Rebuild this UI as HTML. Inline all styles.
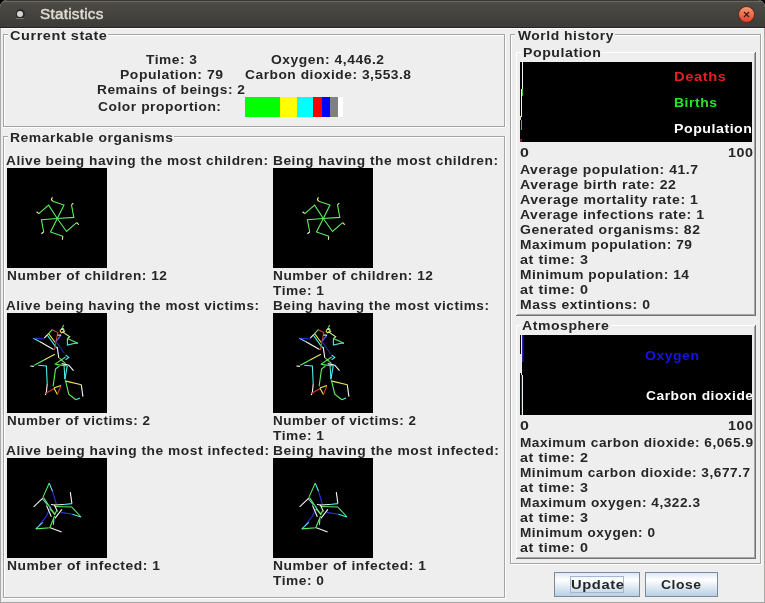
<!DOCTYPE html>
<html><head><meta charset="utf-8"><title>Statistics</title>
<style>
html,body{margin:0;padding:0;}
body{width:765px;height:603px;position:relative;overflow:hidden;background:#000;font-family:"Liberation Sans",sans-serif;}
#win{position:absolute;left:0;top:0;width:765px;height:603px;background:#eeeeee;border-radius:7px 7px 0 0;overflow:hidden;}
.a{position:absolute;}
.t{position:absolute;white-space:pre;font-weight:bold;font-size:13px;line-height:15px;transform-origin:0 0;will-change:transform;letter-spacing:0.5px;}
.g{position:absolute;background:#a4a4a4;}
.w{position:absolute;background:#ffffff;}
.blk{position:absolute;background:#000;}
</style></head><body>
<div id="win">
<!-- title bar -->
<div class="a" style="left:0;top:0;width:765px;height:28px;background:linear-gradient(#3a3935 0px,#3a3935 1px,#69675f 1px,#69675f 2px,#524f4a 2px,#4b4944 4px,#3d3c38 26px,#3d3c38 27px,#252422 27px);"></div>
<div class="a" style="left:40px;top:5px;font-size:14px;font-weight:normal;line-height:18px;color:#dfdbd2;white-space:pre;transform-origin:0 0;transform:scaleX(1.095);will-change:transform;-webkit-text-stroke:0.45px #dfdbd2;letter-spacing:0.2px">Statistics</div>
<div class="a" style="left:15.5px;top:9px;width:9px;height:9.5px;border-radius:50%;background:#2c2b28;"></div><div class="a" style="left:17px;top:10.8px;width:6.2px;height:6.2px;border-radius:50%;background:#d6d5d0;"></div><div class="a" style="left:16px;top:18px;width:8px;height:1px;background:#75736c;border-radius:1px;"></div>
<div class="a" style="left:738px;top:6px;width:17px;height:17px;border-radius:50%;background:#5e2a1c;"></div>
<div class="a" style="left:739px;top:7px;width:15px;height:15px;border-radius:50%;background:linear-gradient(#f49a78,#ec6a48 55%,#e4402e);"></div>
<svg class="a" style="left:738px;top:6px;" width="17" height="17"><path d="M6 6L11 11M11 6L6 11" stroke="#40180c" stroke-width="1.2"/></svg>
<!-- window borders -->
<div class="a" style="left:0;top:28px;width:765px;height:1px;background:#fbfbfb;"></div>
<div class="a" style="left:0;top:28px;width:1px;height:575px;background:#a9a9ab;"></div>
<div class="a" style="left:764px;top:28px;width:1px;height:575px;background:#a8a8a6;"></div>
<div class="g" style="left:0;top:602px;width:765px;height:1px;"></div>

<!-- Current state etched border: x3..505, y34..127 -->
<div class="g" style="left:3px;top:34px;width:5px;height:1px;"></div>
<div class="w" style="left:4px;top:35px;width:4px;height:1px;"></div>
<div class="g" style="left:108px;top:34px;width:396px;height:1px;"></div>
<div class="w" style="left:108px;top:35px;width:396px;height:1px;"></div>
<div class="g" style="left:3px;top:34px;width:1px;height:92px;"></div>
<div class="w" style="left:4px;top:35px;width:1px;height:91px;"></div>
<div class="g" style="left:504px;top:34px;width:1px;height:93px;"></div>
<div class="w" style="left:505px;top:34px;width:1px;height:94px;"></div>
<div class="g" style="left:3px;top:126px;width:502px;height:1px;"></div>
<div class="w" style="left:3px;top:127px;width:503px;height:1px;"></div>

<!-- color bar -->
<div class="a" style="left:245px;top:97px;height:20px;width:35px;background:#00ff00;"></div>
<div class="a" style="left:280px;top:97px;height:20px;width:17px;background:#ffff00;"></div>
<div class="a" style="left:297px;top:97px;height:20px;width:16px;background:#00ffff;"></div>
<div class="a" style="left:313px;top:97px;height:20px;width:9px;background:#ff0000;"></div>
<div class="a" style="left:322px;top:97px;height:20px;width:8px;background:#0000ff;"></div>
<div class="a" style="left:330px;top:97px;height:20px;width:8px;background:#808080;"></div>
<div class="a" style="left:338px;top:97px;height:20px;width:5px;background:#ffffff;"></div>

<!-- Remarkable organisms etched border: x3..505, y136..598 -->
<div class="g" style="left:3px;top:136px;width:5px;height:1px;"></div>
<div class="w" style="left:4px;top:137px;width:4px;height:1px;"></div>
<div class="g" style="left:174px;top:136px;width:330px;height:1px;"></div>
<div class="w" style="left:174px;top:137px;width:330px;height:1px;"></div>
<div class="g" style="left:3px;top:136px;width:1px;height:461px;"></div>
<div class="w" style="left:4px;top:137px;width:1px;height:460px;"></div>
<div class="g" style="left:504px;top:136px;width:1px;height:462px;"></div>
<div class="w" style="left:505px;top:136px;width:1px;height:463px;"></div>
<div class="g" style="left:3px;top:597px;width:502px;height:1px;"></div>
<div class="w" style="left:3px;top:598px;width:503px;height:1px;"></div>

<!-- organism boxes -->
<div class="blk" style="left:7px;top:168px;width:100px;height:100px;"></div>
<div class="blk" style="left:273px;top:168px;width:100px;height:100px;"></div>
<div class="blk" style="left:7px;top:313px;width:100px;height:100px;"></div>
<div class="blk" style="left:273px;top:313px;width:100px;height:100px;"></div>
<div class="blk" style="left:7px;top:458px;width:100px;height:100px;"></div>
<div class="blk" style="left:273px;top:458px;width:100px;height:100px;"></div>
<svg class="a" style="left:7px;top:168px;" width="100" height="100" fill="none" stroke-width="1.1"><polyline points="50.3,50.5 57.0,37.0 45.6,33.2" stroke="#60ee60" />
<polyline points="45.6,33.2 44.4,31.6 45.4,29.3" stroke="#fafaa0" />
<polyline points="50.3,50.5 41.6,37.1 31.8,45.6" stroke="#60ee60" />
<polyline points="31.8,45.6 29.6,43.8" stroke="#fafaa0" />
<polyline points="50.3,50.5 34.4,51.7 36.7,64.0" stroke="#60ee60" />
<polyline points="36.7,64.0 34.4,65.8" stroke="#fafaa0" />
<polyline points="50.3,50.5 43.5,64.0 55.8,68.3" stroke="#60ee60" />
<polyline points="55.8,68.3 55.4,71.7" stroke="#fafaa0" />
<polyline points="50.3,50.5 59.5,63.5 69.6,54.6" stroke="#60ee60" />
<polyline points="69.6,54.6 71.8,56.7" stroke="#fafaa0" />
<polyline points="50.3,50.5 66.8,49.4 64.5,36.8" stroke="#60ee60" />
<polyline points="64.5,36.8 66.3,35.2" stroke="#fafaa0" /></svg>
<svg class="a" style="left:273px;top:168px;" width="100" height="100" fill="none" stroke-width="1.1"><polyline points="50.3,50.5 57.0,37.0 45.6,33.2" stroke="#60ee60" />
<polyline points="45.6,33.2 44.4,31.6 45.4,29.3" stroke="#fafaa0" />
<polyline points="50.3,50.5 41.6,37.1 31.8,45.6" stroke="#60ee60" />
<polyline points="31.8,45.6 29.6,43.8" stroke="#fafaa0" />
<polyline points="50.3,50.5 34.4,51.7 36.7,64.0" stroke="#60ee60" />
<polyline points="36.7,64.0 34.4,65.8" stroke="#fafaa0" />
<polyline points="50.3,50.5 43.5,64.0 55.8,68.3" stroke="#60ee60" />
<polyline points="55.8,68.3 55.4,71.7" stroke="#fafaa0" />
<polyline points="50.3,50.5 59.5,63.5 69.6,54.6" stroke="#60ee60" />
<polyline points="69.6,54.6 71.8,56.7" stroke="#fafaa0" />
<polyline points="50.3,50.5 66.8,49.4 64.5,36.8" stroke="#60ee60" />
<polyline points="64.5,36.8 66.3,35.2" stroke="#fafaa0" /></svg>
<svg class="a" style="left:7px;top:313px;" width="100" height="100" fill="none" stroke-width="1.1"><polyline points="26.3,25.2 33.0,28.8" stroke="#50eeee" />
<polyline points="33.0,28.8 46.5,36.5" stroke="#f8f8f8" />
<polyline points="27.5,25.4 36.9,26.0" stroke="#3030e0" />
<polyline points="37.2,25.2 40.9,21.3" stroke="#f8f8f8" />
<polyline points="40.9,21.3 45.5,16.3" stroke="#60ee60" />
<polyline points="41.6,20.6 48.2,29.5" stroke="#f0ea50" />
<polyline points="40.2,22.0 48.0,32.8 50.2,35.0" stroke="#50eeee" />
<polyline points="45.5,17.0 50.8,19.6 47.5,36.9" stroke="#e03828" />
<polyline points="54.0,22.1 49.4,27.9" stroke="#5070ff" />
<polyline points="49.4,29.0 57.5,40.7" stroke="#2828b8" />
<polyline points="50.2,34.2 51.8,44.8" stroke="#f8f8f8" />
<polyline points="55.2,14.5 56.9,12.2" stroke="#60ee60" />
<polyline points="52.9,18.0 55.2,15.1 57.5,18.6 54.6,19.8 52.9,18.0" stroke="#f0ea50" />
<polyline points="55.8,15.1 57.2,17.0" stroke="#50eeee" />
<polyline points="55.2,18.6 62.7,23.8 60.4,25.6" stroke="#d0f0b0" />
<polyline points="60.4,25.6 70.9,30.2" stroke="#60ee60" />
<polyline points="60.4,25.6 60.4,32.0 68.0,30.2 70.9,30.2" stroke="#50eeee" />
<polyline points="50.5,22.1 54.0,22.1" stroke="#f8f8f8" />
<polyline points="27.3,52.2 37.0,47.0" stroke="#60ee60" />
<polyline points="37.0,47.0 47.9,41.2" stroke="#f0ea50" />
<polyline points="23.4,53.0 26.9,53.4" stroke="#f8f8f8" />
<polyline points="31.2,52.2 39.4,53.0 40.2,71.0" stroke="#50eeee" />
<polyline points="40.2,71.0 39.4,78.9 38.3,82.0" stroke="#f8f8f8" />
<polyline points="38.3,80.4 46.9,75.7" stroke="#e03828" />
<polyline points="46.9,75.0 50.4,81.6" stroke="#f0ea50" />
<polyline points="50.4,81.6 53.9,72.6" stroke="#e03828" />
<polyline points="46.9,75.0 53.9,72.6" stroke="#f0ea50" />
<polyline points="46.1,73.4 48.5,56.1 52.4,53.0" stroke="#60ee60" />
<polyline points="47.7,51.4 58.6,44.0" stroke="#60ee60" />
<polyline points="52.4,45.1 58.6,50.6" stroke="#60ee60" />
<polyline points="48.5,51.4 60.2,53.0" stroke="#60ee60" />
<polyline points="54.7,50.6 61.8,52.2 66.5,57.7" stroke="#f8f8f8" />
<polyline points="57.1,53.0 57.9,66.3" stroke="#50eeee" />
<polyline points="60.2,53.0 57.9,66.3" stroke="#50eeee" />
<polyline points="57.9,67.9 74.3,71.8" stroke="#f0ea50" />
<polyline points="74.3,71.8 75.9,83.6" stroke="#f8f8f8" />
<polyline points="58.6,67.9 61.8,81.2 68.8,86.7" stroke="#60ee60" />
<polyline points="68.8,86.7 73.0,85.0" stroke="#50eeee" />
<polyline points="58.6,42.0 61.8,44.4 58.6,46.7" stroke="#50eeee" /></svg>
<svg class="a" style="left:273px;top:313px;" width="100" height="100" fill="none" stroke-width="1.1"><polyline points="26.3,25.2 33.0,28.8" stroke="#50eeee" />
<polyline points="33.0,28.8 46.5,36.5" stroke="#f8f8f8" />
<polyline points="27.5,25.4 36.9,26.0" stroke="#3030e0" />
<polyline points="37.2,25.2 40.9,21.3" stroke="#f8f8f8" />
<polyline points="40.9,21.3 45.5,16.3" stroke="#60ee60" />
<polyline points="41.6,20.6 48.2,29.5" stroke="#f0ea50" />
<polyline points="40.2,22.0 48.0,32.8 50.2,35.0" stroke="#50eeee" />
<polyline points="45.5,17.0 50.8,19.6 47.5,36.9" stroke="#e03828" />
<polyline points="54.0,22.1 49.4,27.9" stroke="#5070ff" />
<polyline points="49.4,29.0 57.5,40.7" stroke="#2828b8" />
<polyline points="50.2,34.2 51.8,44.8" stroke="#f8f8f8" />
<polyline points="55.2,14.5 56.9,12.2" stroke="#60ee60" />
<polyline points="52.9,18.0 55.2,15.1 57.5,18.6 54.6,19.8 52.9,18.0" stroke="#f0ea50" />
<polyline points="55.8,15.1 57.2,17.0" stroke="#50eeee" />
<polyline points="55.2,18.6 62.7,23.8 60.4,25.6" stroke="#d0f0b0" />
<polyline points="60.4,25.6 70.9,30.2" stroke="#60ee60" />
<polyline points="60.4,25.6 60.4,32.0 68.0,30.2 70.9,30.2" stroke="#50eeee" />
<polyline points="50.5,22.1 54.0,22.1" stroke="#f8f8f8" />
<polyline points="27.3,52.2 37.0,47.0" stroke="#60ee60" />
<polyline points="37.0,47.0 47.9,41.2" stroke="#f0ea50" />
<polyline points="23.4,53.0 26.9,53.4" stroke="#f8f8f8" />
<polyline points="31.2,52.2 39.4,53.0 40.2,71.0" stroke="#50eeee" />
<polyline points="40.2,71.0 39.4,78.9 38.3,82.0" stroke="#f8f8f8" />
<polyline points="38.3,80.4 46.9,75.7" stroke="#e03828" />
<polyline points="46.9,75.0 50.4,81.6" stroke="#f0ea50" />
<polyline points="50.4,81.6 53.9,72.6" stroke="#e03828" />
<polyline points="46.9,75.0 53.9,72.6" stroke="#f0ea50" />
<polyline points="46.1,73.4 48.5,56.1 52.4,53.0" stroke="#60ee60" />
<polyline points="47.7,51.4 58.6,44.0" stroke="#60ee60" />
<polyline points="52.4,45.1 58.6,50.6" stroke="#60ee60" />
<polyline points="48.5,51.4 60.2,53.0" stroke="#60ee60" />
<polyline points="54.7,50.6 61.8,52.2 66.5,57.7" stroke="#f8f8f8" />
<polyline points="57.1,53.0 57.9,66.3" stroke="#50eeee" />
<polyline points="60.2,53.0 57.9,66.3" stroke="#50eeee" />
<polyline points="57.9,67.9 74.3,71.8" stroke="#f0ea50" />
<polyline points="74.3,71.8 75.9,83.6" stroke="#f8f8f8" />
<polyline points="58.6,67.9 61.8,81.2 68.8,86.7" stroke="#60ee60" />
<polyline points="68.8,86.7 73.0,85.0" stroke="#50eeee" />
<polyline points="58.6,42.0 61.8,44.4 58.6,46.7" stroke="#50eeee" /></svg>
<svg class="a" style="left:7px;top:458px;" width="100" height="100" fill="none" stroke-width="1.1"><polyline points="45.5,33.2 49.3,46.1" stroke="#3030e0" />
<polyline points="32.0,67.6 39.5,58.0 43.9,48.2" stroke="#3030e0" />
<polyline points="53.9,54.4 65.4,56.3" stroke="#3030e0" />
<polyline points="42.2,25.1 35.8,39.6" stroke="#60ee60" />
<polyline points="42.2,25.1 45.5,33.2" stroke="#50eeee" />
<polyline points="26.6,48.8 35.8,40.2" stroke="#f8f8f8" />
<polyline points="35.5,41.0 40.5,47.0" stroke="#50eeee" />
<polyline points="36.5,39.6 47.9,56.9" stroke="#60ee60" />
<polyline points="63.3,34.2 64.9,45.6" stroke="#f8f8f8" />
<polyline points="47.4,47.0 56.9,46.5" stroke="#f8f8f8" />
<polyline points="56.9,46.5 64.9,45.6" stroke="#50eeee" />
<polyline points="48.0,48.5 64.3,49.0" stroke="#60ee60" />
<polyline points="64.3,48.5 74.0,59.0" stroke="#60ee60" />
<polyline points="65.4,56.3 74.0,59.0" stroke="#50eeee" />
<polyline points="54.9,51.4 47.9,60.4" stroke="#f8f8f8" />
<polyline points="28.8,70.9 42.8,69.8 47.6,58.0" stroke="#60ee60" />
<polyline points="28.8,70.9 35.8,64.4" stroke="#50eeee" />
<polyline points="43.3,69.8 54.6,74.1" stroke="#f8f8f8" />
<polyline points="46.9,60.9 46.4,66.9" stroke="#50eeee" />
<polyline points="39.5,47.4 44.4,58.9" stroke="#f8f8f8" />
<polyline points="44.0,46.5 47.4,47.0 50.4,53.4" stroke="#f8f8f8" />
<polyline points="43.0,51.0 48.0,56.0 50.0,52.0" stroke="#60ee60" /></svg>
<svg class="a" style="left:273px;top:458px;" width="100" height="100" fill="none" stroke-width="1.1"><polyline points="45.5,33.2 49.3,46.1" stroke="#3030e0" />
<polyline points="32.0,67.6 39.5,58.0 43.9,48.2" stroke="#3030e0" />
<polyline points="53.9,54.4 65.4,56.3" stroke="#3030e0" />
<polyline points="42.2,25.1 35.8,39.6" stroke="#60ee60" />
<polyline points="42.2,25.1 45.5,33.2" stroke="#50eeee" />
<polyline points="26.6,48.8 35.8,40.2" stroke="#f8f8f8" />
<polyline points="35.5,41.0 40.5,47.0" stroke="#50eeee" />
<polyline points="36.5,39.6 47.9,56.9" stroke="#60ee60" />
<polyline points="63.3,34.2 64.9,45.6" stroke="#f8f8f8" />
<polyline points="47.4,47.0 56.9,46.5" stroke="#f8f8f8" />
<polyline points="56.9,46.5 64.9,45.6" stroke="#50eeee" />
<polyline points="48.0,48.5 64.3,49.0" stroke="#60ee60" />
<polyline points="64.3,48.5 74.0,59.0" stroke="#60ee60" />
<polyline points="65.4,56.3 74.0,59.0" stroke="#50eeee" />
<polyline points="54.9,51.4 47.9,60.4" stroke="#f8f8f8" />
<polyline points="28.8,70.9 42.8,69.8 47.6,58.0" stroke="#60ee60" />
<polyline points="28.8,70.9 35.8,64.4" stroke="#50eeee" />
<polyline points="43.3,69.8 54.6,74.1" stroke="#f8f8f8" />
<polyline points="46.9,60.9 46.4,66.9" stroke="#50eeee" />
<polyline points="39.5,47.4 44.4,58.9" stroke="#f8f8f8" />
<polyline points="44.0,46.5 47.4,47.0 50.4,53.4" stroke="#f8f8f8" />
<polyline points="43.0,51.0 48.0,56.0 50.0,52.0" stroke="#60ee60" /></svg>

<!-- World history etched border: x510..761, y34..563 -->
<div class="g" style="left:510px;top:34px;width:5px;height:1px;"></div>
<div class="w" style="left:511px;top:35px;width:4px;height:1px;"></div>
<div class="g" style="left:615px;top:34px;width:145px;height:1px;"></div>
<div class="w" style="left:615px;top:35px;width:145px;height:1px;"></div>
<div class="g" style="left:510px;top:34px;width:1px;height:529px;"></div>
<div class="w" style="left:511px;top:35px;width:1px;height:528px;"></div>
<div class="g" style="left:760px;top:34px;width:1px;height:530px;"></div>
<div class="w" style="left:761px;top:34px;width:1px;height:531px;"></div>
<div class="g" style="left:510px;top:563px;width:251px;height:1px;"></div>
<div class="w" style="left:510px;top:564px;width:252px;height:1px;"></div>

<!-- Population raised bevel: x516..756, y52..316 -->
<div class="w" style="left:516px;top:52px;width:5px;height:1px;"></div>
<div class="w" style="left:601px;top:52px;width:154px;height:1px;"></div>
<div class="w" style="left:516px;top:52px;width:1px;height:263px;"></div>
<div class="a" style="left:755px;top:52px;width:1px;height:264px;background:#747474;"></div>
<div class="a" style="left:754px;top:53px;width:1px;height:262px;background:#a6a6a6;"></div>
<div class="a" style="left:516px;top:315px;width:240px;height:1px;background:#747474;"></div>
<div class="a" style="left:517px;top:314px;width:238px;height:1px;background:#a6a6a6;"></div>

<!-- chart 1 -->
<div class="blk" style="left:520px;top:62px;width:232px;height:80px;"></div>
<div class="a" style="left:522px;top:62px;width:1px;height:27px;background:#f4f4f4;"></div>
<div class="a" style="left:522px;top:89px;width:1px;height:7px;background:#40c040;"></div>
<div class="a" style="left:521px;top:89px;width:1px;height:28px;background:#f4f4f4;"></div>
<div class="a" style="left:520px;top:116px;width:1px;height:4px;background:#b0e8b0;"></div>
<div class="a" style="left:521px;top:120px;width:1px;height:10px;background:#40c040;"></div>
<div class="a" style="left:520px;top:139px;width:2px;height:3px;background:#7a1c24;"></div>

<!-- Atmosphere raised bevel: x516..756, y325..559 -->
<div class="w" style="left:516px;top:325px;width:5px;height:1px;"></div>
<div class="w" style="left:611px;top:325px;width:144px;height:1px;"></div>
<div class="w" style="left:516px;top:325px;width:1px;height:233px;"></div>
<div class="a" style="left:755px;top:325px;width:1px;height:234px;background:#747474;"></div>
<div class="a" style="left:754px;top:326px;width:1px;height:232px;background:#a6a6a6;"></div>
<div class="a" style="left:516px;top:558px;width:240px;height:1px;background:#747474;"></div>
<div class="a" style="left:517px;top:557px;width:238px;height:1px;background:#a6a6a6;"></div>

<!-- chart 2 -->
<div class="blk" style="left:520px;top:335px;width:232px;height:80px;"></div>
<div class="a" style="left:521px;top:335px;width:1px;height:40px;background:#f0f0f0;"></div>
<div class="a" style="left:520px;top:354px;width:1px;height:19px;background:#e8e8e8;"></div>
<div class="a" style="left:522px;top:335px;width:1px;height:27px;background:#2020a8;"></div>
<div class="a" style="left:523px;top:335px;width:1px;height:27px;background:#101060;"></div>
<div class="a" style="left:521px;top:375px;width:1px;height:40px;background:#2020a8;"></div>
<div class="a" style="left:522px;top:375px;width:1px;height:40px;background:#f0f0f0;"></div>

<!-- buttons -->
<div class="a" style="left:554px;top:572px;width:84px;height:23px;border:1px solid #7a8a99;background:linear-gradient(#dde8f3 0%,#ffffff 30%,#b8cfe5 100%);"></div>
<div class="a" style="left:570px;top:576px;width:52px;height:15px;border:1px solid #a3b8cc;"></div>
<div class="a" style="left:645px;top:572px;width:71px;height:23px;border:1px solid #7a8a99;background:linear-gradient(#dde8f3 0%,#ffffff 30%,#b8cfe5 100%);"></div>

<div class="t" style="left:10.40px;top:28px;color:#262626;transform:scaleX(1.1153)">Current state</div>
<div class="t" style="left:145.80px;top:52px;color:#262626;transform:scaleX(1.0557)">Time: 3</div>
<div class="t" style="left:119.80px;top:67px;color:#262626;transform:scaleX(1.0718)">Population: 79</div>
<div class="t" style="left:97.30px;top:82px;color:#262626;transform:scaleX(1.0551)">Remains of beings: 2</div>
<div class="t" style="left:98.40px;top:99px;color:#262626;transform:scaleX(1.0638)">Color proportion:</div>
<div class="t" style="left:271.20px;top:52px;color:#262626;transform:scaleX(1.0657)">Oxygen: 4,446.2</div>
<div class="t" style="left:244.70px;top:67px;color:#262626;transform:scaleX(1.0576)">Carbon dioxide: 3,553.8</div>
<div class="t" style="left:10.40px;top:130px;color:#262626;transform:scaleX(1.0681)">Remarkable organisms</div>
<div class="t" style="left:6.40px;top:153px;color:#262626;transform:scaleX(1.0514)">Alive being having the most children:</div>
<div class="t" style="left:7.40px;top:268px;color:#262626;transform:scaleX(1.0519)">Number of children: 12</div>
<div class="t" style="left:6.40px;top:298px;color:#262626;transform:scaleX(1.0415)">Alive being having the most victims:</div>
<div class="t" style="left:7.40px;top:413px;color:#262626;transform:scaleX(1.0354)">Number of victims: 2</div>
<div class="t" style="left:6.40px;top:443px;color:#262626;transform:scaleX(1.0586)">Alive being having the most infected:</div>
<div class="t" style="left:7.40px;top:558px;color:#262626;transform:scaleX(1.0650)">Number of infected: 1</div>
<div class="t" style="left:273.40px;top:153px;color:#262626;transform:scaleX(1.0566)">Being having the most children:</div>
<div class="t" style="left:273.40px;top:268px;color:#262626;transform:scaleX(1.0519)">Number of children: 12</div>
<div class="t" style="left:273.40px;top:283px;color:#262626;transform:scaleX(1.0557)">Time: 1</div>
<div class="t" style="left:273.40px;top:298px;color:#262626;transform:scaleX(1.0451)">Being having the most victims:</div>
<div class="t" style="left:273.40px;top:413px;color:#262626;transform:scaleX(1.0354)">Number of victims: 2</div>
<div class="t" style="left:273.40px;top:428px;color:#262626;transform:scaleX(1.0557)">Time: 1</div>
<div class="t" style="left:273.40px;top:443px;color:#262626;transform:scaleX(1.0649)">Being having the most infected:</div>
<div class="t" style="left:273.40px;top:558px;color:#262626;transform:scaleX(1.0650)">Number of infected: 1</div>
<div class="t" style="left:273.40px;top:573px;color:#262626;transform:scaleX(1.0557)">Time: 0</div>
<div class="t" style="left:518.40px;top:28px;color:#262626;transform:scaleX(1.0661)">World history</div>
<div class="t" style="left:523.40px;top:45px;color:#262626;transform:scaleX(1.0877)">Population</div>
<div class="t" style="left:674.40px;top:69px;color:#e62020;transform:scaleX(1.1325)">Deaths</div>
<div class="t" style="left:674.40px;top:95px;color:#28e428;transform:scaleX(1.0724)">Births</div>
<div class="t" style="left:674.40px;top:121px;color:#ffffff;transform:scaleX(1.0877)">Population</div>
<div class="t" style="left:520.40px;top:145px;color:#262626;transform:scaleX(1.2283)">0</div>
<div class="t" style="left:728.00px;top:145px;color:#262626;transform:scaleX(1.0990)">100</div>
<div class="t" style="left:520.10px;top:162px;color:#262626;transform:scaleX(1.0746)">Average population: 41.7</div>
<div class="t" style="left:520.10px;top:177px;color:#262626;transform:scaleX(1.0854)">Average birth rate: 22</div>
<div class="t" style="left:520.10px;top:192px;color:#262626;transform:scaleX(1.0852)">Average mortality rate: 1</div>
<div class="t" style="left:520.10px;top:207px;color:#262626;transform:scaleX(1.0760)">Average infections rate: 1</div>
<div class="t" style="left:520.10px;top:222px;color:#262626;transform:scaleX(1.0772)">Generated organisms: 82</div>
<div class="t" style="left:520.10px;top:237px;color:#262626;transform:scaleX(1.0557)">Maximum population: 79</div>
<div class="t" style="left:520.10px;top:252px;color:#262626;transform:scaleX(1.1034)">at time: 3</div>
<div class="t" style="left:520.10px;top:267px;color:#262626;transform:scaleX(1.0561)">Minimum population: 14</div>
<div class="t" style="left:520.10px;top:282px;color:#262626;transform:scaleX(1.1034)">at time: 0</div>
<div class="t" style="left:520.10px;top:297px;color:#262626;transform:scaleX(1.0723)">Mass extintions: 0</div>
<div class="t" style="left:522.40px;top:318px;color:#262626;transform:scaleX(1.0821)">Atmosphere</div>
<div class="t" style="left:645.40px;top:348px;color:#1414e6;transform:scaleX(1.0752)">Oxygen</div>
<div class="t" style="left:645.90px;top:388px;color:#ffffff;transform:scaleX(1.0578)">Carbon dioxide</div>
<div class="t" style="left:520.40px;top:418px;color:#262626;transform:scaleX(1.2283)">0</div>
<div class="t" style="left:728.00px;top:418px;color:#262626;transform:scaleX(1.0990)">100</div>
<div class="t" style="left:520.40px;top:435px;color:#262626;transform:scaleX(1.0477)">Maximum carbon dioxide: 6,065.9</div>
<div class="t" style="left:520.40px;top:450px;color:#262626;transform:scaleX(1.1034)">at time: 2</div>
<div class="t" style="left:520.40px;top:465px;color:#262626;transform:scaleX(1.0480)">Minimum carbon dioxide: 3,677.7</div>
<div class="t" style="left:520.40px;top:480px;color:#262626;transform:scaleX(1.1034)">at time: 3</div>
<div class="t" style="left:520.40px;top:495px;color:#262626;transform:scaleX(1.0500)">Maximum oxygen: 4,322.3</div>
<div class="t" style="left:520.40px;top:510px;color:#262626;transform:scaleX(1.1034)">at time: 3</div>
<div class="t" style="left:520.40px;top:525px;color:#262626;transform:scaleX(1.0434)">Minimum oxygen: 0</div>
<div class="t" style="left:520.40px;top:540px;color:#262626;transform:scaleX(1.1034)">at time: 0</div>
<div class="t" style="left:570.90px;top:577px;color:#262626;transform:scaleX(1.1368)">Update</div>
<div class="t" style="left:660.90px;top:577px;color:#262626;transform:scaleX(1.0684)">Close</div>
</div>
</body></html>
